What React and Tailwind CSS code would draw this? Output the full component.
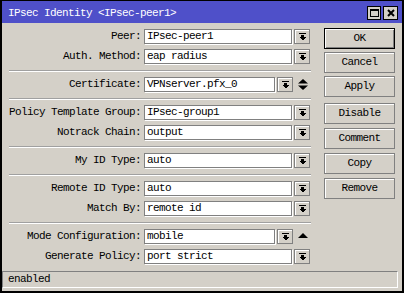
import React from 'react';

const mono = "font-['Liberation_Mono',monospace] text-[11px] tracking-[-0.6px] text-black";

const DropIcon = () => (
  <svg width="7" height="8" viewBox="0 0 7 8" shapeRendering="crispEdges">
    <rect x="0" y="0" width="7" height="1" fill="#000" />
    <rect x="2" y="2" width="3" height="2" fill="#000" />
    <polygon points="0,4 7,4 3.5,7.5" fill="#000" />
  </svg>
);

const UpDownIcon = () => (
  <svg width="10" height="11" viewBox="0 0 10 11">
    <polygon points="5,0 10,4.5 0,4.5" fill="#000" />
    <polygon points="0,6.5 10,6.5 5,11" fill="#000" />
  </svg>
);

const UpIcon = () => (
  <svg width="10" height="5" viewBox="0 0 10 5">
    <polygon points="5,0 10,5 0,5" fill="#000" />
  </svg>
);

const DropButton = () => (
  <div className="w-[16px] h-[15px] flex items-center justify-center bg-[#d4d0c8] border border-[#808080] shadow-[inset_1px_1px_0_#fff]">
    <DropIcon />
  </div>
);

const Row = ({ label, value, icon, first }) => (
  <div className={`flex items-center h-[15px] ${first ? '' : 'mt-[5px]'}`}>
    <div className={`w-[139px] text-right whitespace-nowrap ${mono}`}>{label}</div>
    <div
      className={`ml-[3px] h-[15px] bg-white border border-[#808080] shadow-[1px_1px_0_#fff] pl-[2px] flex items-center whitespace-nowrap overflow-hidden ${mono} ${icon ? 'w-[131px]' : 'w-[148px]'}`}
    >
      {value}
    </div>
    <div className="ml-[2px]">
      <DropButton />
    </div>
    {icon && <div className="ml-[5px] flex items-center">{icon}</div>}
  </div>
);

const Sep = () => (
  <div className="ml-[7px] w-[302px] mt-[6px] mb-[5px] border-t border-[#a0a0a0] border-b border-b-white" />
);

const Btn = ({ children, primary, className = '' }) => (
  <div
    className={`w-[71px] h-[21px] flex items-center justify-center bg-[#d4d0c8] border ${
      primary
        ? 'border-black shadow-[inset_1px_1px_0_#fff,inset_-1px_-1px_0_#808080]'
        : 'border-[#808080] shadow-[inset_1px_1px_0_#fff]'
    } ${mono} ${className}`}
  >
    {children}
  </div>
);

export default function App() {
  return (
    <div className="w-[404px] h-[293px] flex flex-col bg-[#d4d0c8] border-t border-x-2 border-b-2 border-black overflow-hidden">
      {/* title bar */}
      <div className="h-[22px] bg-[#4f50c9] flex items-center pl-[6px] pr-[4px]">
        <span className={`${mono} text-white pt-[2px]`}>IPsec Identity &lt;IPsec-peer1&gt;</span>
        <div className="ml-auto flex gap-[2px] pt-[2px]">
          <div className="w-[14px] h-[14px] bg-[#d4d0c8] border border-black flex items-center justify-center">
            <div className="w-[9px] h-[8px] border border-black border-t-2" />
          </div>
          <div className="w-[15px] h-[14px] bg-[#d4d0c8] border border-black flex items-center justify-center">
            <svg width="8" height="8" viewBox="0 0 8 8">
              <path d="M1 1 L7 7 M7 1 L1 7" stroke="#000" strokeWidth="2" />
            </svg>
          </div>
        </div>
      </div>

      <div className="flex flex-1">
        {/* form */}
        <div className="w-[312px] pt-[6px]">
          <Row first label="Peer:" value="IPsec-peer1" />
          <Row label="Auth. Method:" value="eap radius" />
          <Sep />
          <Row first label="Certificate:" value="VPNserver.pfx_0" icon={<UpDownIcon />} />
          <Sep />
          <Row first label="Policy Template Group:" value="IPsec-group1" />
          <Row label="Notrack Chain:" value="output" />
          <Sep />
          <Row first label="My ID Type:" value="auto" />
          <Sep />
          <Row first label="Remote ID Type:" value="auto" />
          <Row label="Match By:" value="remote id" />
          <Sep />
          <Row first label="Mode Configuration:" value="mobile" icon={<div className="pb-[3px]"><UpIcon /></div>} />
          <Row label="Generate Policy:" value="port strict" />
        </div>

        {/* buttons */}
        <div className="ml-[10px] pt-[5px] flex flex-col">
          <Btn primary>OK</Btn>
          <Btn className="mt-[3px]">Cancel</Btn>
          <Btn className="mt-[3px]">Apply</Btn>
          <Btn className="mt-[6px]">Disable</Btn>
          <Btn className="mt-[4px]">Comment</Btn>
          <Btn className="mt-[4px]">Copy</Btn>
          <Btn className="mt-[4px]">Remove</Btn>
        </div>
      </div>

      {/* status bar */}
      <div className="mr-[4px] mb-[3px] h-[17px] flex items-center pl-[5px] border-t border-l border-[#808080] border-b border-r border-b-white border-r-white">
        <span className={mono}>enabled</span>
      </div>
    </div>
  );
}
